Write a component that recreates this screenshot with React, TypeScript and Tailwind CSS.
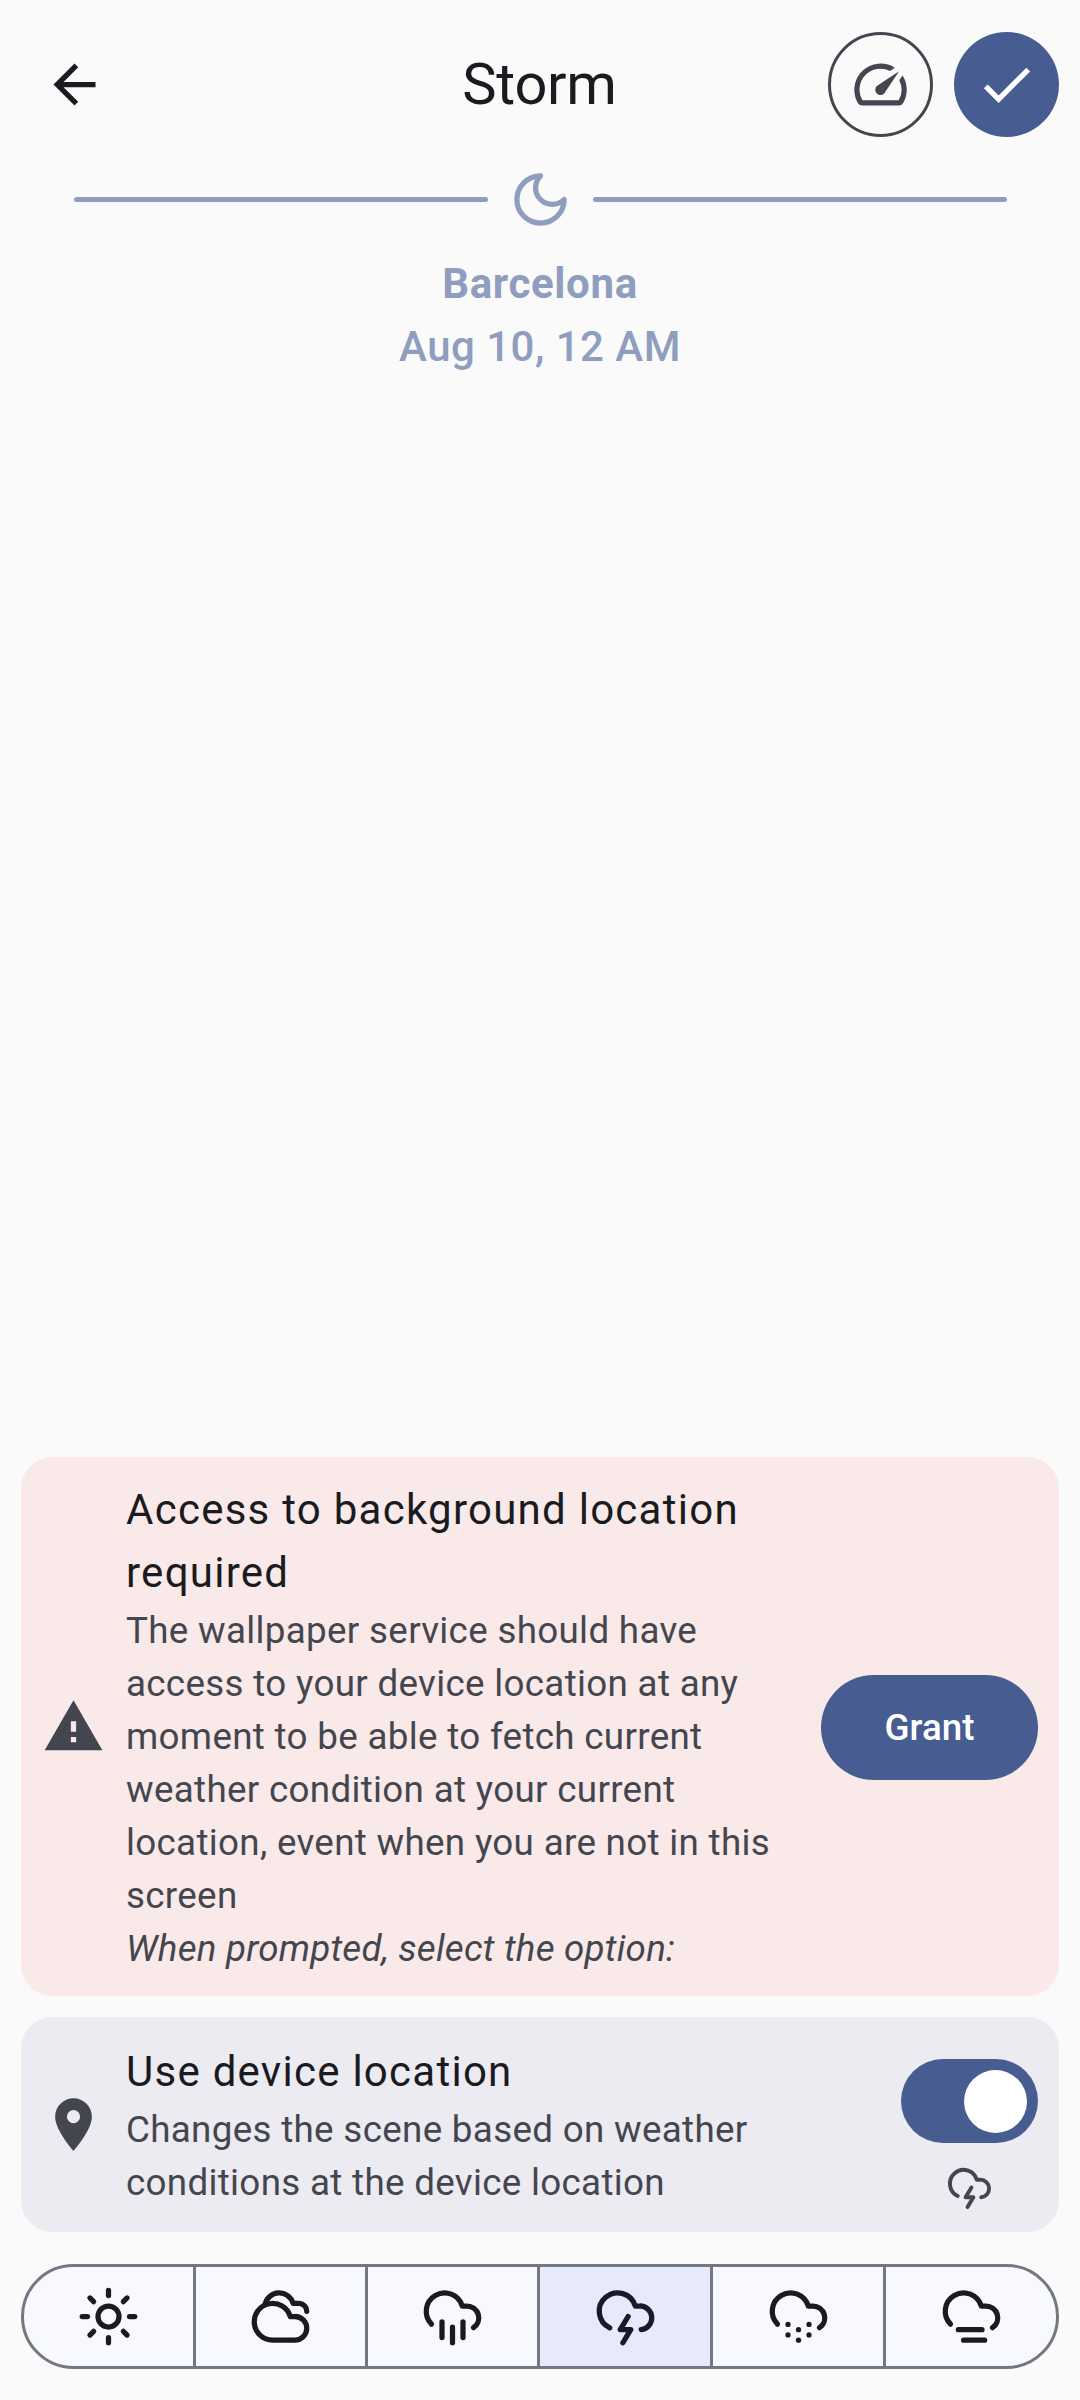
import type { ReactNode } from "react";

function Filled({ d, className }: { d: string; className?: string }) {
  return (
    <svg viewBox="0 0 24 24" fill="currentColor" className={`size-[63px] shrink-0 ${className ?? ""}`}>
      <path d={d} />
    </svg>
  );
}

function Stroked({ paths, className, children }: { paths: string[]; className?: string; children?: ReactNode }) {
  return (
    <svg
      viewBox="0 0 24 24"
      fill="none"
      stroke="currentColor"
      strokeWidth={2}
      strokeLinecap="round"
      strokeLinejoin="round"
      className={`shrink-0 ${className ?? "size-[63px]"}`}
    >
      {children}
      {paths.map((d) => (
        <path key={d} d={d} />
      ))}
    </svg>
  );
}

const CLOUD_TOP = "M4 14.899A7 7 0 1 1 15.71 8h1.79a4.5 4.5 0 0 1 2.5 8.242";
const LIGHTNING = ["M6 16.326A7 7 0 1 1 15.71 8h1.79a4.5 4.5 0 0 1 .5 8.973", "m13 12-3 5h4l-3 5"];

const SUN = [
  "M12 2v2",
  "M12 20v2",
  "m4.93 4.93 1.41 1.41",
  "m17.66 17.66 1.41 1.41",
  "M2 12h2",
  "M20 12h2",
  "m6.34 17.66-1.41 1.41",
  "m19.07 4.93-1.41 1.41",
];

const CLOUDY = [
  "M17.5 21H9a7 7 0 1 1 6.71-9h1.79a4.5 4.5 0 1 1 0 9Z",
  "M22 10a3 3 0 0 0-3-3h-2.207a5.502 5.502 0 0 0-10.702.5",
];

const segments = [
  { name: "Clear", width: "w-[175px]", icon: <Stroked paths={SUN}><circle cx="12" cy="12" r="4" /></Stroked> },
  { name: "Cloudy", width: "w-[175px]", icon: <Stroked paths={CLOUDY} /> },
  { name: "Rain", width: "w-[175px]", icon: <Stroked paths={[CLOUD_TOP, "M16 14v6", "M8 14v6", "M12 16v6"]} /> },
  { name: "Storm", width: "w-[176px]", icon: <Stroked paths={LIGHTNING} />, selected: true },
  {
    name: "Snow",
    width: "w-[176px]",
    icon: (
      <Stroked
        paths={[CLOUD_TOP, "M8 15h.01", "M8 19h.01", "M12 17h.01", "M12 21h.01", "M16 15h.01", "M16 19h.01"]}
      />
    ),
  },
  { name: "Fog", width: "w-[176px]", icon: <Stroked paths={[CLOUD_TOP, "M16 17H7", "M17 21H9"]} /> },
];

function Header() {
  return (
    <header className="grid h-[105px] grid-cols-[1fr_auto_1fr] items-center pr-[21px] pl-[43px] text-[#191b21]">
      <button className="justify-self-start" aria-label="Back">
        <Filled d="M20 11H7.83l5.59-5.59L12 4l-8 8 8 8 1.41-1.41L7.83 13H20v-2z" />
      </button>
      <h1 className="mr-[23px] mb-[2px] text-[57.75px] leading-[74px] tracking-[-0.3px]">Storm</h1>
      <div className="flex gap-[21px] justify-self-end">
        <button
          aria-label="Speed"
          className="flex size-[105px] items-center justify-center rounded-full border-3 border-[#44464f] text-[#44464f]"
        >
          <Filled d="M20.38 8.57l-1.23 1.85a8 8 0 0 1-.22 7.58H5.07A8 8 0 0 1 15.58 6.85l1.85-1.23A10 10 0 0 0 3.35 19a2 2 0 0 0 1.72 1h13.85a2 2 0 0 0 1.74-1 10 10 0 0 0-.27-10.44zm-9.79 6.84a2 2 0 0 0 2.83 0l5.66-8.49-8.49 5.66a2 2 0 0 0 0 2.83z" />
        </button>
        <button
          aria-label="Apply"
          className="flex size-[105px] items-center justify-center rounded-full bg-[#475d92] text-white"
        >
          <Filled d="M9 16.17L4.83 12l-1.42 1.41L9 19 21 7l-1.41-1.41z" />
        </button>
      </div>
    </header>
  );
}

function Card({ tone, icon, title, children, action }: {
  tone: string;
  icon: ReactNode;
  title: string;
  children: ReactNode;
  action: ReactNode;
}) {
  return (
    <section className={`flex items-center gap-[21px] rounded-[31.5px] p-[21px] text-[#44464f] ${tone}`}>
      {icon}
      <div className="min-w-0 flex-1">
        <h2 className="text-[42px] leading-[63px] tracking-[1.26px] text-[#191b21]">{title}</h2>
        <div className="text-[36.75px] leading-[53px] tracking-[0.32px]">{children}</div>
      </div>
      {action}
    </section>
  );
}

export default function App() {
  return (
    <main className="flex h-[2400px] w-[1080px] flex-col overflow-hidden bg-[#fafafa] pt-[32px] pb-[31px] font-[Roboto,sans-serif]">
      <Header />

      <div className="mt-[31px] flex flex-col items-center text-[#8f9dbe]">
        <div className="flex w-full items-center gap-[21px] pr-[73px] pl-[74px]">
          <span className="h-[5px] flex-1 rounded-full bg-current" />
          <Stroked paths={["M12 3a6 6 0 0 0 9 9 9 9 0 1 1-9-9Z"]} />
          <span className="h-[5px] flex-1 rounded-full bg-current" />
        </div>
        <p className="mt-[21px] text-[42px] leading-[63px] font-bold tracking-[0.65px]">Barcelona</p>
        <p className="text-[42px] leading-[63px] font-medium tracking-[0.48px]">Aug 10, 12 AM</p>
      </div>

      <div className="mt-auto flex flex-col gap-[21px] px-[21px]">
        <Card
          tone="bg-[#f9e9e8]"
          icon={<Filled d="M1 21h22L12 2 1 21zm12-3h-2v-2h2v2zm0-4h-2v-4h2v4z" />}
          title="Access to background location required"
          action={
            <button className="mt-[2px] h-[105px] w-[217px] rounded-full bg-[#475d92] text-[36.75px] font-medium tracking-normal text-white">
              Grant
            </button>
          }
        >
          <p>
            The wallpaper service should have <br />
            access to your device location at any moment to be able to fetch current weather condition at your
            current <br />
            location, event when you are not in this screen
          </p>
          <p className="tracking-[0.22px] italic">When prompted, select the option:</p>
        </Card>

        <Card
          tone="bg-[#ecebf1]"
          icon={
            <Filled d="M12 2C8.13 2 5 5.13 5 9c0 5.25 7 13 7 13s7-7.75 7-13c0-3.87-3.13-7-7-7zm0 9.5a2.5 2.5 0 0 1 0-5 2.5 2.5 0 0 1 0 5z" />
          }
          title="Use device location"
          action={
            <div className="flex flex-col items-center pt-[21px]">
              <div className="flex h-[84px] w-[137px] items-center justify-end rounded-full bg-[#475d92] pr-[11px]">
                <span className="size-[63px] rounded-full bg-white" />
              </div>
              <Stroked paths={LIGHTNING} className="mt-[21px] size-[47px]" />
            </div>
          }
        >
          <p>Changes the scene based on weather conditions at the device location</p>
        </Card>

        <div className="mt-[11px] flex h-[105px]">
          {segments.map((s) => (
            <button
              key={s.name}
              aria-label={s.name}
              className={`-ml-[3px] flex items-center justify-center border-3 border-[#757780] first:ml-0 first:rounded-l-full last:rounded-r-full ${s.width} ${
                s.selected ? "bg-[#e7eafa] text-[#161a2c]" : "bg-[#f8f9fe] text-[#191b21]"
              }`}
            >
              {s.icon}
            </button>
          ))}
        </div>
      </div>
    </main>
  );
}
